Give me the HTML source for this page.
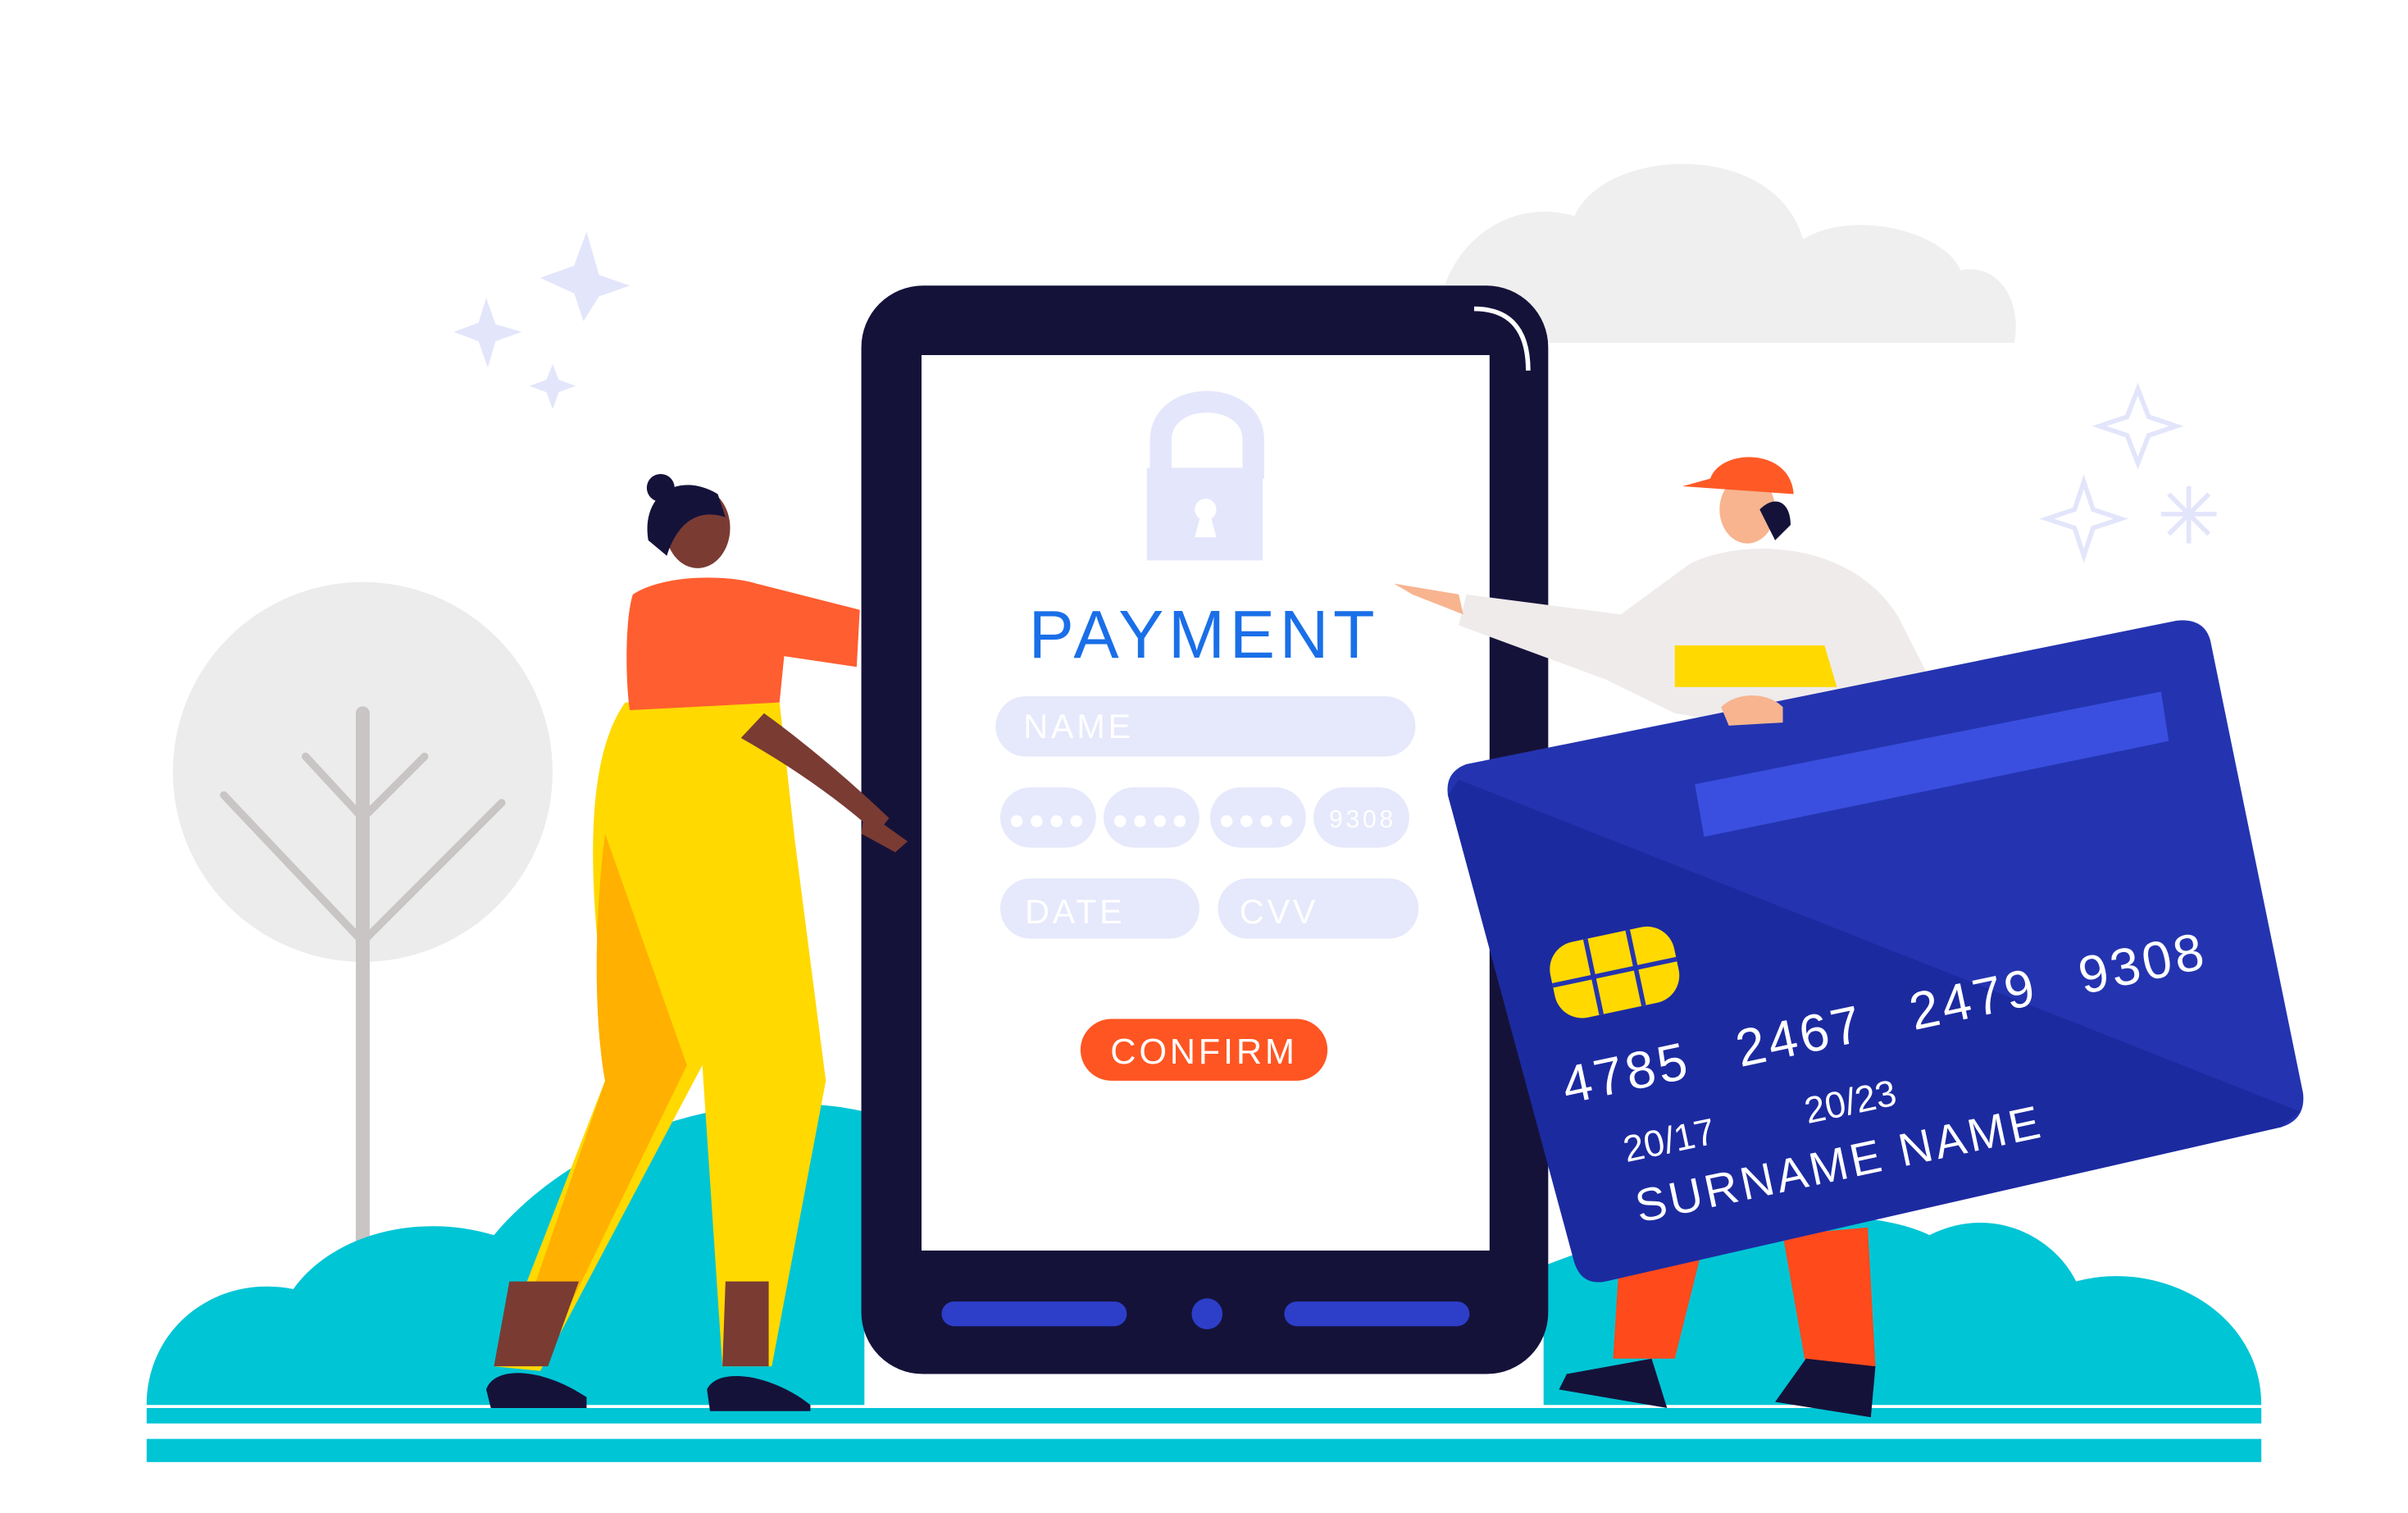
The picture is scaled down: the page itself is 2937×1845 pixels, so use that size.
<!DOCTYPE html>
<html><head><meta charset="utf-8"><style>
html,body{margin:0;padding:0;background:#fff;overflow:hidden}
svg{display:block;width:2937px;height:1845px}
text{font-family:"Liberation Sans",sans-serif}
</style></head><body>
<svg viewBox="0 0 1560 980" preserveAspectRatio="none" xmlns="http://www.w3.org/2000/svg">
<rect width="1560" height="980" fill="#fff"/>
<!-- cloud -->
<path d="M932 222 C925 170 970 125 1020 140 C1040 95 1150 90 1168 155 C1200 135 1260 150 1270 175 C1295 170 1310 195 1305 222 Z" fill="#efefef"/>
<!-- stars -->
<g fill="#e3e5fb">
<path d="M380 150 L388 178 L408 185 L388 192 L378 208 L372 190 L350 180 L372 172 Z"/>
<path d="M315 193 L321 210 L338 215 L321 221 L316 238 L310 221 L294 215 L310 209 Z"/>
<path d="M358 236 L362 246 L373 250 L362 254 L358 265 L354 254 L343 250 L354 246 Z"/>
</g>
<g fill="none" stroke="#e3e5fb" stroke-width="3">
<path d="M1385 252 L1392 270 L1410 276 L1392 282 L1385 300 L1378 282 L1360 276 L1378 270 Z"/>
<path d="M1350 312 L1356 330 L1374 336 L1356 342 L1350 360 L1344 342 L1326 336 L1344 330 Z"/>
<path d="M1418 315 V352 M1400 333 H1436 M1405 320 L1431 346 M1431 320 L1405 346"/>
</g>
<!-- tree -->
<circle cx="235" cy="500" r="123" fill="#ececec"/>
<g stroke="#c9c5c5" stroke-width="5" fill="none" stroke-linecap="round">
<path d="M235 462 V830" stroke-width="9"/>
<path d="M235 610 L145 515 M235 610 L325 520 M235 530 L198 490 M235 530 L275 490"/>
</g>
<!-- ground -->
<path d="M95 910 C95 860 140 825 190 835 C215 800 270 785 320 800 C370 740 470 700 560 720 V910 Z" fill="#00c5d5"/>
<path d="M1000 910 V820 C1050 800 1100 790 1130 800 C1180 780 1230 790 1250 800 C1290 780 1330 800 1345 830 C1400 815 1465 850 1465 910 Z" fill="#00c5d5"/>
<rect x="95" y="912" width="1370" height="10" fill="#00c5d5"/>
<rect x="95" y="932" width="1370" height="15" fill="#00c5d5"/>
<!-- phone -->
<rect x="558" y="185" width="445" height="705" rx="40" fill="#15123a"/>
<rect x="597" y="230" width="368" height="580" fill="#fff"/>
<path d="M955 200 C975 200 990 210 990 240" stroke="#fff" stroke-width="3" fill="none"/>
<rect x="610" y="843" width="120" height="16" rx="8" fill="#2d3ec9"/>
<rect x="832" y="843" width="120" height="16" rx="8" fill="#2d3ec9"/>
<circle cx="782" cy="851" r="10" fill="#2d3ec9"/>
<!-- lock -->
<path d="M752 310 V285 C752 252 812 252 812 285 V310" stroke="#e4e6fb" stroke-width="14" fill="none"/>
<rect x="743" y="303" width="75" height="60" fill="#e4e6fb"/>
<circle cx="781" cy="330" r="7" fill="#fff"/><path d="M778 333 L774 348 H788 L784 333 Z" fill="#fff"/>
<text x="780" y="426" font-size="44" fill="#1a6fe8" text-anchor="middle" letter-spacing="3">PAYMENT</text>
<g fill="#e6e8fb">
<rect x="645" y="451" width="272" height="39" rx="19.5"/>
<rect x="648" y="510" width="62" height="39" rx="19.5"/>
<rect x="715" y="510" width="62" height="39" rx="19.5"/>
<rect x="784" y="510" width="62" height="39" rx="19.5"/>
<rect x="851" y="510" width="62" height="39" rx="19.5"/>
<rect x="648" y="569" width="129" height="39" rx="19.5"/>
<rect x="789" y="569" width="130" height="39" rx="19.5"/>
</g>
<g fill="#fff" font-size="22" letter-spacing="2">
<text x="663" y="478">NAME</text>
<text x="664" y="598">DATE</text>
<text x="803" y="598">CVV</text>
<text x="861" y="536" font-size="16">9308</text>
<text x="679" y="537" font-size="18" text-anchor="middle">●●●●</text>
<text x="746" y="537" font-size="18" text-anchor="middle">●●●●</text>
<text x="815" y="537" font-size="18" text-anchor="middle">●●●●</text>
</g>
<rect x="700" y="660" width="160" height="40" rx="20" fill="#ff5522"/>
<text x="780" y="689" font-size="23" fill="#fff" text-anchor="middle" letter-spacing="2">CONFIRM</text>
<!-- woman -->
<path d="M405 455 C380 490 382 560 388 620 C390 660 395 690 392 700 L320 885 L350 888 L455 690 L468 885 L500 885 L535 700 L515 545 L505 455 Z" fill="#ffd900"/>
<path d="M392 540 C382 620 388 680 392 700 L330 880 L350 885 L445 690 Z" fill="#ffb000"/>
<path d="M330 830 L320 885 L355 885 L375 830 Z" fill="#7a3b33"/>
<path d="M470 830 L468 885 L498 885 L498 830 Z" fill="#7a3b33"/>
<path d="M315 900 C320 885 350 885 380 905 L380 912 H318 Z" fill="#15123a"/>
<path d="M458 900 C465 885 500 890 525 910 V914 H460 Z" fill="#15123a"/>
<path d="M410 385 C405 400 405 440 408 460 L505 455 L508 425 L555 432 L557 395 L490 378 C470 372 430 372 410 385 Z" fill="#ff5e30"/>
<path d="M480 478 C510 495 540 515 568 540 L576 530 C550 505 520 480 495 462 Z" fill="#7a3b33"/>
<path d="M560 525 L588 545 L580 552 L558 540 Z" fill="#7a3b33"/>
<ellipse cx="452" cy="342" rx="21" ry="26" fill="#7a3b33"/>
<path d="M420 350 C415 320 440 305 465 320 L470 335 C455 330 440 335 432 360 Z" fill="#15123a"/>
<circle cx="428" cy="316" r="9" fill="#15123a"/>
<!-- man -->
<path d="M1050 800 L1045 880 L1085 880 L1105 800 Z" fill="#ff4a1c"/>
<path d="M1155 800 L1170 885 L1215 885 L1210 795 Z" fill="#ff4a1c"/>
<path d="M1015 890 L1070 880 L1080 912 L1010 900 Z" fill="#15123a"/>
<path d="M1150 908 L1170 880 L1215 885 L1212 918 Z" fill="#15123a"/>
<path d="M1095 365 C1130 348 1200 350 1230 400 L1258 455 L1180 478 L1085 462 L1040 440 L945 405 L950 385 L1050 398 Z" fill="#efebeb"/>
<path d="M1085 418 L1182 418 L1190 445 L1085 445 Z" fill="#ffd900"/>
<ellipse cx="1132" cy="330" rx="18" ry="22" fill="#f7b48f"/>
<path d="M1108 310 C1115 290 1160 290 1162 320 L1090 315 Z" fill="#ff5a26"/>
<path d="M1140 330 C1150 320 1160 325 1160 340 L1150 350 Z" fill="#15123a"/>
<path d="M903 378 L945 385 L948 398 L915 385 Z" fill="#f7b48f"/>
<!-- card -->
<g>
<path d="M950 495 L1410 402 Q1428 400 1432 415 L1492 708 Q1494 725 1478 730 L1040 830 Q1025 833 1020 818 L938 515 Q936 500 950 495 Z" fill="#2434b0"/>
<path d="M945 505 L1490 720 L1478 730 L1040 830 Q1025 833 1020 818 L938 515 Z" fill="#1c2aa0"/>
<path d="M1098 508 L1400 448 L1405 480 L1104 542 Z" fill="#3a4fe0"/>
<g transform="rotate(-12 1045 630)">
<rect x="1005" y="605" width="82" height="50" rx="18" fill="#ffd900"/>
<path d="M1005 630 H1087 M1032 605 V655 M1060 605 V655" stroke="#2434b0" stroke-width="3"/>
</g>
<g fill="#fff" transform="rotate(-12 1015 715)">
<text x="1015" y="715" font-size="34" letter-spacing="2">4785</text>
<text x="1130" y="715" font-size="34" letter-spacing="2">2467</text>
<text x="1245" y="715" font-size="34" letter-spacing="2">2479</text>
<text x="1357" y="715" font-size="34" letter-spacing="2">9308</text>
<text x="1045" y="760" font-size="24">20/17</text>
<text x="1165" y="760" font-size="24">20/23</text>
<text x="1045" y="800" font-size="30" letter-spacing="2">SURNAME NAME</text>
</g>
</g>
<path d="M1115 458 C1125 448 1145 448 1155 458 L1155 468 L1120 470 Z" fill="#f7b48f"/>
</svg>
</body></html>
